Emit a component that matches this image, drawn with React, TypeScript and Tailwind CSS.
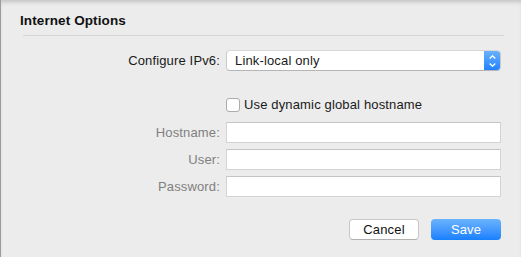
import React from "react";

const font = { fontFamily: '"Liberation Sans", Arial, sans-serif' };

function Field() {
  return (
    <div className="h-[21px] w-[275px] bg-white border border-[#d3d3d3] border-t-[#c4c4c4]" />
  );
}

export default function App() {
  return (
    <div
      style={font}
      className="w-[521px] h-[257px] bg-[#ececec] border-l border-[#9c9c9c] shadow-[inset_0_4px_4px_-2px_rgba(0,0,0,0.18)] flex flex-col text-[13px] text-[#1a1a1a] tracking-[0.15px] overflow-hidden"
    >
      <div className="pl-[19px] pt-[12px] h-[35px]">
        <div className="font-bold text-[13.5px] leading-[17px] text-[#111] tracking-[0.1px]">Internet Options</div>
      </div>
      <div className="ml-[22px] w-[481px] h-px bg-[#d6d6d6]" />
      <div className="mt-[14px] grid grid-cols-[200px_275px] gap-x-[6px] ml-[19px] items-center">
        <div className="text-right leading-[21px]">Configure IPv6:</div>
        <div className="h-[21px] w-[275px] flex rounded-[4px] border border-[#c9c9c9] border-t-[#d8d8d8] border-b-[#b5b5b5] bg-white overflow-hidden">
          <div className="flex-1 pl-[8px] leading-[19px]">Link-local only</div>
          <div className="w-[17px] -my-px -mr-px h-[21px] rounded-r-[4px] bg-gradient-to-b from-[#6cb4fb] to-[#1a7ffd] flex flex-col items-center justify-center gap-[4px]">
            <svg width="7" height="4" viewBox="0 0 7 4">
              <path d="M0.7 3.5 L3.5 0.8 L6.3 3.5" fill="none" stroke="white" strokeWidth="1.3" />
            </svg>
            <svg width="7" height="4" viewBox="0 0 7 4">
              <path d="M0.7 0.5 L3.5 3.2 L6.3 0.5" fill="none" stroke="white" strokeWidth="1.3" />
            </svg>
          </div>
        </div>

        <div className="mt-[27px]" />
        <div className="mt-[27px] flex items-center h-[14px]">
          <div className="w-[14px] h-[14px] rounded-[3px] border border-[#ababab] bg-white" />
          <span className="ml-[4px] leading-[14px]">Use dynamic global hostname</span>
        </div>

        <div className="mt-[10px] text-right text-[#808080] leading-[21px]">Hostname:</div>
        <div className="mt-[10px]"><Field /></div>
        <div className="mt-[6px] text-right text-[#808080] leading-[21px]">User:</div>
        <div className="mt-[6px]"><Field /></div>
        <div className="mt-[6px] text-right text-[#808080] leading-[21px]">Password:</div>
        <div className="mt-[6px]"><Field /></div>
      </div>
      <div className="mt-[22px] flex justify-end gap-[12px] pr-[20px]">
        <div className="w-[70px] h-[21px] rounded-[4px] bg-white border border-[#c8c8c8] border-b-[#b0b0b0] flex items-center justify-center text-[#111] leading-[19px]">
          Cancel
        </div>
        <div className="w-[70px] h-[21px] rounded-[4px] bg-gradient-to-b from-[#6ab2fb] to-[#1580fe] flex items-center justify-center text-white leading-[21px]">
          Save
        </div>
      </div>
    </div>
  );
}
